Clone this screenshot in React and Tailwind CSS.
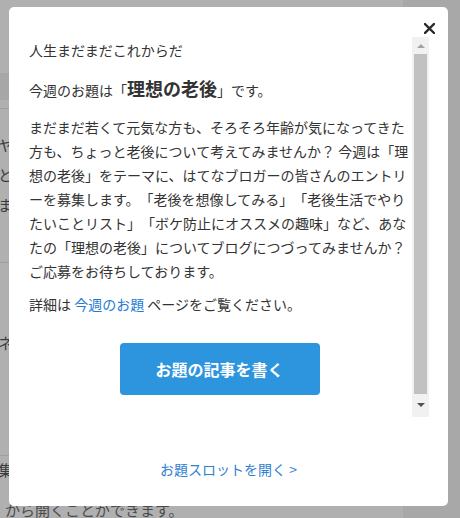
import React from 'react';

const font = "font-['Noto_Sans_CJK_JP','Noto_Sans',sans-serif]";

function CloseIcon() {
  return (
    <svg width="11" height="11" viewBox="0 0 11 11">
      <path d="M1 1L10 10M10 1L1 10" stroke="#2b2b2b" strokeWidth="2.4" strokeLinecap="square" />
    </svg>
  );
}

function FakeScrollbar() {
  return (
    <div className="w-[17px] h-full bg-[#f1f1f1] flex flex-col items-center">
      <div className="h-[17px] w-full flex items-center justify-center">
        <svg width="8" height="5" viewBox="0 0 8 5">
          <path d="M0 5L4 1L8 5Z" fill="#a3a3a3" />
        </svg>
      </div>
      <div className="flex-1 w-[13px] bg-[#c1c1c1]" />
      <div className="h-[23px] w-full flex items-center justify-center">
        <svg width="8" height="5" viewBox="0 0 8 5">
          <path d="M0 0L8 0L4 4Z" fill="#505050" />
        </svg>
      </div>
    </div>
  );
}

function BackgroundPage() {
  return (
    <div className={`w-full h-[518px] flex text-[15px] text-[#3a3a3a] ${font}`}>
      <div className="w-[403px] bg-[#b0b0b0] flex flex-col">
        <div className="h-[73px] shrink-0" />
        <div className="h-[27px] shrink-0 bg-[#a7a7a7]" />
        <div className="h-[9px] shrink-0 border-b border-[#9e9e9e]" />
        <div className="h-[154px] shrink-0 border-b border-[#9e9e9e] pt-[21px] leading-[30px] whitespace-nowrap -ml-[2px]">
          <div>ヤ</div>
          <div>と</div>
          <div>ま</div>
        </div>
        <div className="h-[193px] shrink-0 border-b border-[#9e9e9e] pt-[65px] leading-[30px] whitespace-nowrap -ml-[2px]">
          ネ
        </div>
        <div className="pt-[2px] leading-[24px] whitespace-nowrap -ml-[2px]">集</div>
        <div className="mt-[16px] leading-[24px] whitespace-nowrap pl-[5px] text-[#4a4a4a]">から開くことができます。</div>
      </div>
      <div className="flex-1 bg-[#a8a8a8]" />
    </div>
  );
}

export default function App() {
  return (
    <div className="relative w-[460px] h-[518px] overflow-hidden">
      <BackgroundPage />

      {/* Modal */}
      <div className={`absolute left-[9px] top-[7px] w-[439px] h-[499px] bg-white rounded-[5px] ${font} text-[#333] [text-spacing-trim:space-all]`}>
        <button className="absolute right-[13px] top-[16px] w-[11px] h-[11px] flex items-center justify-center">
          <CloseIcon />
        </button>

        <div className="mt-[30px] h-[380px] flex">
          <div className="flex-1 overflow-hidden pl-[20px] pr-[2px]">
            <p className="mt-[1px] text-[14px] leading-[24px]">人生まだまだこれからだ</p>
            <p className="mt-[12px] text-[14px] leading-[28px]">
              今週のお題は「<strong className="text-[18px] font-bold">理想の老後</strong>」です。
            </p>
            <p className="mt-[11px] text-[14px] leading-[24px] whitespace-nowrap">
              まだまだ若くて元気な方も、そろそろ年齢が気になってきた<br />
              方も、ちょっと老後について考えてみませんか？ 今週は「理<br />
              想の老後」をテーマに、はてなブロガーの皆さんのエントリ<br />
              ーを募集します。「老後を想像してみる」「老後生活でやり<br />
              たいことリスト」「ボケ防止にオススメの趣味」など、あな<br />
              たの「理想の老後」についてブログにつづってみませんか？<br />
              ご応募をお待ちしております。
            </p>
            <p className="mt-[9px] text-[14px] leading-[24px]">
              詳細は <a className="text-[#1f7ad6]">今週のお題</a> ページをご覧ください。
            </p>
            <div className="mt-[27px] flex justify-center">
              <button className="w-[200px] h-[52px] rounded-[4px] bg-[#2d95dd] text-white text-[16px] font-bold">
                お題の記事を書く
              </button>
            </div>
          </div>
          <FakeScrollbar />
          <div className="w-[19px]" />
        </div>

        <div className="mt-[40px] flex justify-center">
          <a className="text-[14px] leading-[24px] text-[#2f7fd3]">お題スロットを開く &gt;</a>
        </div>
      </div>
    </div>
  );
}
